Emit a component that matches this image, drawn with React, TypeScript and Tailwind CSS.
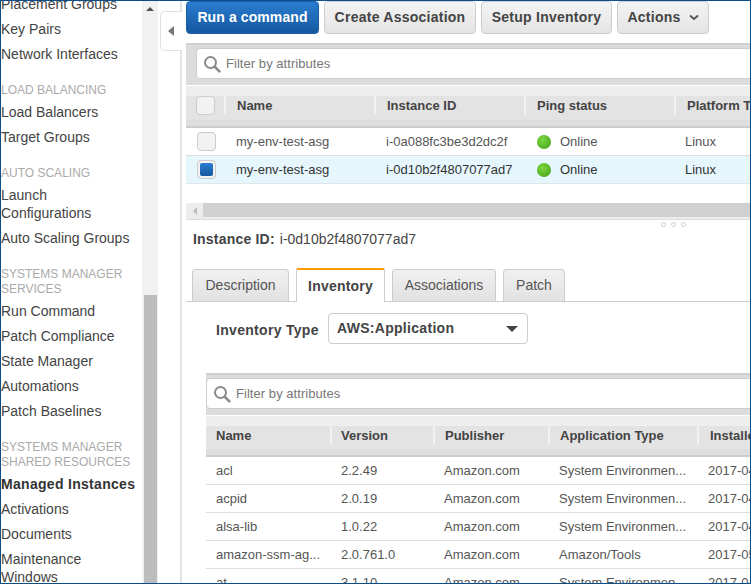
import React from 'react';

type NavEntry = { heading?: string[]; items: string[] };
type Col = { label: string; w: string; pl: string };

const NAV: NavEntry[] = [
  { items: ['Placement Groups', 'Key Pairs', 'Network Interfaces'] },
  { heading: ['LOAD BALANCING'], items: ['Load Balancers', 'Target Groups'] },
  { heading: ['AUTO SCALING'], items: ['Launch Configurations', 'Auto Scaling Groups'] },
  {
    heading: ['SYSTEMS MANAGER', 'SERVICES'],
    items: ['Run Command', 'Patch Compliance', 'State Manager', 'Automations', 'Patch Baselines'],
  },
  {
    heading: ['SYSTEMS MANAGER', 'SHARED RESOURCES'],
    items: ['Managed Instances', 'Activations', 'Documents', 'Maintenance Windows'],
  },
];

const INSTANCE_COLS: Col[] = [
  { label: 'Name', w: 'w-[150px]', pl: 'pl-[11px]' },
  { label: 'Instance ID', w: 'w-[150px]', pl: 'pl-[11px]' },
  { label: 'Ping status', w: 'w-[150px]', pl: 'pl-[11px]' },
  { label: 'Platform Type', w: 'w-[150px]', pl: 'pl-[11px]' },
];

const INVENTORY_COLS: Col[] = [
  { label: 'Name', w: 'w-[126px]', pl: 'pl-[10px]' },
  { label: 'Version', w: 'w-[103px]', pl: 'pl-[9px]' },
  { label: 'Publisher', w: 'w-[115px]', pl: 'pl-[10px]' },
  { label: 'Application Type', w: 'w-[149px]', pl: 'pl-[10px]' },
  { label: 'Installed Time', w: 'w-[150px]', pl: 'pl-[11px]' },
];

const CELL_WIDTHS = ['w-[125px]', 'w-[103px]', 'w-[115px]', 'w-[149px]', 'w-[150px]'];

const INVENTORY_ROWS = [
  ['acl', '2.2.49', 'Amazon.com', 'System Environmen...', '2017-04'],
  ['acpid', '2.0.19', 'Amazon.com', 'System Environmen...', '2017-04'],
  ['alsa-lib', '1.0.22', 'Amazon.com', 'System Environmen...', '2017-04'],
  ['amazon-ssm-ag...', '2.0.761.0', 'Amazon.com', 'Amazon/Tools', '2017-05'],
  ['at', '3.1.10', 'Amazon.com', 'System Environmen...', '2017-04'],
];

function Sidebar() {
  return (
    <div className="w-[141px] shrink-0 overflow-hidden bg-white pr-[3px] text-[14px] text-[#444]">
      <div className="-mt-[8.5px]">
        {NAV.map((group, i) => (
          <div key={i}>
            {group.heading && (
              <div className="mt-[16px] mb-[2px] text-[12px] leading-[15px] whitespace-nowrap text-[#aaa]">
                {group.heading.map((line) => (
                  <div key={line}>{line}</div>
                ))}
              </div>
            )}
            {group.items.map((item) => (
              <div
                key={item}
                className={
                  item === 'Managed Instances'
                    ? 'py-[3.5px] leading-[18px] font-bold tracking-[0.3px] whitespace-nowrap text-[#333]'
                    : 'py-[3.5px] leading-[18px]'
                }
              >
                {item}
              </div>
            ))}
          </div>
        ))}
      </div>
    </div>
  );
}

function Scrollbar() {
  return (
    <div className="flex w-[16px] shrink-0 flex-col bg-[#f1f1f1]">
      <div className="flex h-[295px] justify-center pt-[7px]">
        <div className="h-0 w-0 border-x-[4px] border-b-[4px] border-x-transparent border-b-[#505050]" />
      </div>
      <div className="mr-[1px] ml-[2px] flex-1 bg-[#bcbcbc]" />
    </div>
  );
}

function ToolButton({ children, primary, w }: { children: React.ReactNode; primary?: boolean; w: string }) {
  return (
    <button
      className={
        primary
          ? `${w} flex h-[33px] items-center justify-center rounded-[4px] border border-[#1a5fa8] bg-gradient-to-b from-[#2a7cd0] to-[#15599f] text-[14px] font-bold tracking-[0.1px] text-white`
          : `${w} flex h-[33px] items-center justify-center rounded-[4px] border border-[#ccc] bg-gradient-to-b from-[#f4f4f4] to-[#e4e4e4] text-[14px] font-bold tracking-[0.25px] text-[#444]`
      }
    >
      {children}
    </button>
  );
}

function SearchIcon() {
  return (
    <svg width="18" height="18" viewBox="0 0 18 18" className="shrink-0" fill="none">
      <circle cx="7.5" cy="7.5" r="5.5" stroke="#8a8a8a" strokeWidth="2" />
      <path d="M11.6 11.6 16.4 16.4" stroke="#8a8a8a" strokeWidth="2.6" strokeLinecap="round" />
    </svg>
  );
}

function FilterBar({ inset }: { inset: string }) {
  return (
    <div className={`h-[42px] border-t-2 border-[#d0d0d0] bg-[#dcdcdc] pt-[3px] ${inset}`}>
      <div className="flex h-[31px] w-[700px] items-center gap-[5px] rounded-[4px] border border-[#ccc] bg-white pl-[6px] text-[13px] tracking-[0.05px] text-[#777]">
        <SearchIcon />
        <span>Filter by attributes</span>
      </div>
    </div>
  );
}

function TableHeader({ cols, first, mid }: { cols: Col[]; first?: React.ReactNode; mid: string }) {
  return (
    <div className="flex flex-col border-t border-b-2 border-t-white border-b-[#ccc] bg-[#dedede] pb-[6px]">
      <div className="h-[10px] bg-[#eeeeee]" />
      <div className={`flex ${mid} items-start bg-[#e3e3e3] text-[13px] font-bold text-[#444]`}>
        {first}
        {cols.map((col) => (
          <div
            key={col.label}
            className={`${col.w} ${col.pl} h-[19px] shrink-0 border-r-2 border-[#f2f2f2] leading-[19px] whitespace-nowrap`}
          >
            {col.label}
          </div>
        ))}
      </div>
    </div>
  );
}

function Checkbox({ checked }: { checked?: boolean }) {
  return (
    <div className="flex h-[19px] w-[19px] items-center justify-center rounded-[4px] border border-[#ccc] bg-[#f2f2f2]">
      {checked && <div className="h-[13px] w-[13px] rounded-[2px] bg-gradient-to-b from-[#2a7cd0] to-[#15599f]" />}
    </div>
  );
}

function PingDot() {
  return <div className="h-[14px] w-[14px] shrink-0 rounded-full bg-[radial-gradient(circle_at_40%_35%,#7cd83e,#3f9e17)]" />;
}

function InstanceRow({ checked, id }: { checked?: boolean; id: string }) {
  return (
    <div
      className={
        checked
          ? 'flex h-[28px] items-center border-b border-[#dfe6ea] bg-[#e6f6fd] text-[13px] text-[#333]'
          : 'flex h-[28px] items-center border-b border-[#ddd] bg-white text-[13px] text-[#555]'
      }
    >
      <div className="flex w-[39px] shrink-0 justify-center pl-[1px]">
        <Checkbox checked={checked} />
      </div>
      <div className="w-[150px] shrink-0 pl-[11px]">my-env-test-asg</div>
      <div className="w-[150px] shrink-0 pl-[11px]">{id}</div>
      <div className="flex w-[150px] shrink-0 items-center gap-[9px] pl-[12px]">
        <PingDot />
        Online
      </div>
      <div className="w-[100px] shrink-0 pl-[10px]">Linux</div>
    </div>
  );
}

function Tab({ label, active, w }: { label: string; active?: boolean; w: string }) {
  return (
    <div
      className={
        active
          ? `${w} relative z-10 -mb-[1px] flex h-[34px] items-center justify-center rounded-t-[2px] border-x border-t-2 border-x-[#ccc] border-t-[#f90] bg-white text-[14px] font-bold tracking-[0.2px] text-[#444]`
          : `${w} flex h-[32px] items-center justify-center rounded-t-[4px] border-x border-t border-[#ccc] bg-gradient-to-b from-[#f0f0f0] to-[#e2e2e2] text-[14px] text-[#555]`
      }
    >
      {label}
    </div>
  );
}

export default function App() {
  return (
    <div className="relative flex h-[584px] w-[751px] overflow-hidden bg-white pl-[1px] font-['Liberation_Sans',Arial,sans-serif] text-[#444]">
      <Sidebar />
      <Scrollbar />

      {/* collapse handle column */}
      <div className="w-[24px] shrink-0 border-r-2 border-[#e4e4e4] pt-[11px] pl-[2px]">
        <div className="flex h-[40px] w-[22px] items-center justify-center rounded-l-[5px] border-y border-l border-[#e0e0e0] bg-white pr-[2px]">
          <div className="h-0 w-0 border-y-[5px] border-r-[6px] border-y-transparent border-r-[#777]" />
        </div>
      </div>

      <div className="min-w-0 flex-1 overflow-hidden pl-[4px]">
        <div className="flex h-[43px] gap-[5px] pt-[1px]">
          <ToolButton primary w="w-[133px]">Run a command</ToolButton>
          <ToolButton w="w-[152px]">Create Association</ToolButton>
          <ToolButton w="w-[131px]">Setup Inventory</ToolButton>
          <ToolButton w="w-[92px]">
            Actions
            <svg width="10" height="7" viewBox="0 0 10 7" className="ml-[8px]" fill="none">
              <path d="M1 1.5 5 5 9 1.5" stroke="#555" strokeWidth="1.8" />
            </svg>
          </ToolButton>
        </div>

        <div className="w-[700px]">
          <FilterBar inset="pl-[10px]" />
          <TableHeader
            cols={INSTANCE_COLS}
            mid="h-[24px]"
            first={
              <div className="flex h-[19px] w-[40px] shrink-0 items-center justify-center border-r-2 border-[#f2f2f2]">
                <Checkbox />
              </div>
            }
          />
          <InstanceRow id="i-0a088fc3be3d2dc2f" />
          <InstanceRow checked id="i-0d10b2f4807077ad7" />

          {/* horizontal scrollbar */}
          <div className="mt-[19px] flex h-[17px] border-b border-[#ddd] bg-[#ececec]">
            <div className="flex w-[17px] items-center justify-center">
              <div className="h-0 w-0 border-y-[4px] border-r-[4px] border-y-transparent border-r-[#bbb]" />
            </div>
            <div className="h-[14px] flex-1 bg-[#d0d0d0]" />
          </div>
        </div>

        {/* resize grip */}
        <div className="flex h-[8px] items-center gap-[5px] pl-[475px]">
          <div className="h-[5px] w-[5px] rounded-full border border-[#ccc]" />
          <div className="h-[5px] w-[5px] rounded-full border border-[#ccc]" />
          <div className="h-[5px] w-[5px] rounded-full border border-[#ccc]" />
        </div>

        <div className="mt-[2px] pl-[7px] text-[14px] leading-[18px] text-[#444]">
          <span className="font-bold tracking-[0.2px]">Instance ID:</span>
          <span className="ml-[5px]">i-0d10b2f4807077ad7</span>
        </div>

        {/* tabs */}
        <div className="mt-[20px] flex w-[700px] items-end gap-[7px] border-b border-[#ccc] pl-[6px]">
          <Tab label="Description" w="w-[97px]" />
          <Tab label="Inventory" active w="w-[89px]" />
          <Tab label="Associations" w="w-[104px]" />
          <Tab label="Patch" w="w-[62px]" />
        </div>

        <div className="mt-[11px] flex items-center pl-[30px]">
          <span className="w-[112px] pt-[4px] text-[14px] font-bold tracking-[0.3px] text-[#444]">Inventory Type</span>
          <div className="flex h-[31px] w-[200px] items-center justify-between rounded-[4px] border border-[#ccc] bg-white pr-[9px] pl-[8px] text-[14px] font-bold tracking-[0.3px] text-[#444]">
            AWS:Application
            <div className="h-0 w-0 border-x-[6px] border-t-[6px] border-x-transparent border-t-[#444]" />
          </div>
        </div>

        <div className="mt-[29px] ml-[20px] w-[700px]">
          <FilterBar inset="" />
          <TableHeader cols={INVENTORY_COLS} mid="h-[23px]" />
          {INVENTORY_ROWS.map((row) => (
            <div key={row[0]} className="flex h-[28px] items-center border-b border-[#ddd] text-[13px] text-[#555]">
              {row.map((cell, i) => (
                <div key={i} className={`${CELL_WIDTHS[i]} shrink-0 whitespace-nowrap pl-[10px]`}>
                  {cell}
                </div>
              ))}
            </div>
          ))}
        </div>
      </div>

      {/* window frame */}
      <div className="pointer-events-none absolute inset-0 border border-[#0b4f8a]" />
    </div>
  );
}
